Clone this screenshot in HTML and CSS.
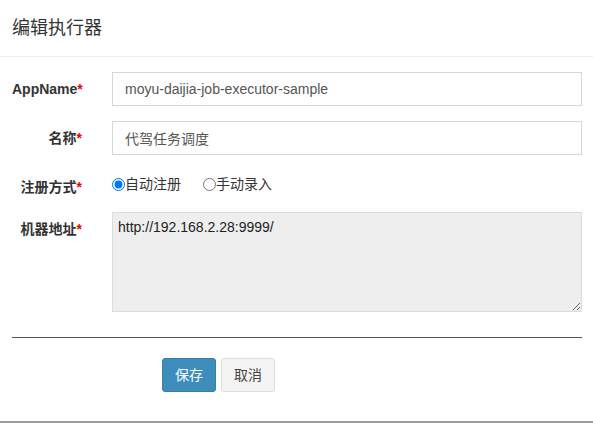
FILE: index.html
```html
<!DOCTYPE html>
<html lang="zh-CN">
<head>
<meta charset="utf-8">
<title>编辑执行器</title>
<link rel="stylesheet" href="styles.css">
</head>
<body>
<div class="modal">
  <div class="modal-header">
    <h4 class="modal-title">编辑执行器</h4>
  </div>
  <form class="modal-body">
    <div class="form-row">
      <label class="row-label">AppName<span class="req">*</span></label>
      <input class="form-control" type="text" value="moyu-daijia-job-executor-sample">
    </div>
    <div class="form-row">
      <label class="row-label">名称<span class="req">*</span></label>
      <input class="form-control" type="text" value="代驾任务调度">
    </div>
    <div class="form-row">
      <label class="row-label">注册方式<span class="req">*</span></label>
      <div class="radio-group">
        <label class="radio-item"><input type="radio" name="addressType" checked>自动注册</label>
        <label class="radio-item"><input type="radio" name="addressType">手动录入</label>
      </div>
    </div>
    <div class="form-row">
      <label class="row-label">机器地址<span class="req">*</span></label>
      <textarea class="address" readonly>http://192.168.2.28:9999/</textarea>
    </div>
    <hr class="divider">
    <div class="actions">
      <button type="button" class="btn btn-primary">保存</button>
      <button type="button" class="btn btn-default">取消</button>
    </div>
  </form>
</div>
</body>
</html>
```
FILE: styles.css
```css
* { box-sizing: border-box; }

html, body {
  margin: 0;
  padding: 0;
  background: #fff;
}

body {
  font-family: "Liberation Sans", "Noto Sans CJK SC", sans-serif;
  font-size: 14px;
  line-height: 20px;
  color: #333;
}

.modal {
  height: 423px;
  border-bottom: 2px solid #9a9a9a;
}

.modal-header {
  height: 57px;
  border-bottom: 1px solid #f0f0f0;
  padding: 0 12px;
}

.modal-title {
  margin: 0;
  font-size: 18px;
  font-weight: normal;
  line-height: 56px;
  color: #333;
}

.modal-body {
  padding: 15px 11px 0 12px;
  margin: 0;
}

.form-row {
  display: grid;
  grid-template-columns: 70px 1fr;
  column-gap: 30px;
  margin-bottom: 15px;
}

.row-label {
  text-align: right;
  font-weight: bold;
  padding-top: 7px;
  line-height: 20px;
  color: #333;
  white-space: nowrap;
}

.req {
  color: #e00;
}

.form-control {
  display: block;
  width: 100%;
  height: 34px;
  padding: 6px 12px;
  font-family: inherit;
  font-size: 14px;
  line-height: 20px;
  color: #555;
  background: #fff;
  border: 1px solid #d2d6de;
  border-radius: 0;
  outline: none;
}

.radio-group {
  display: flex;
  gap: 22px;
  padding-top: 1px;
}

.radio-item {
  display: flex;
  align-items: center;
  line-height: 20px;
  color: #333;
}

.radio-item input {
  margin: 0;
  width: 13px;
  height: 13px;
}

.address {
  display: block;
  width: 100%;
  height: 100px;
  padding: 4px 5px;
  font-family: inherit;
  font-size: 14px;
  line-height: 20px;
  color: #222;
  background: #eee;
  border: 1px solid #dcdcdc;
  border-radius: 0;
  outline: none;
}

.divider {
  border: 0;
  border-top: 1px solid #555;
  margin: 25px 0 20px;
  height: 0;
}

.actions {
  display: flex;
  gap: 5px;
  padding-left: 150px;
}

.btn {
  height: 34px;
  padding: 6px 12px;
  font-family: inherit;
  font-size: 14px;
  line-height: 20px;
  border-radius: 3px;
  border: 1px solid transparent;
  cursor: pointer;
}

.btn-primary {
  background: #3c8dbc;
  border-color: #367fa9;
  color: #fff;
}

.btn-default {
  background: #f4f4f4;
  border-color: #ddd;
  color: #444;
}
```
